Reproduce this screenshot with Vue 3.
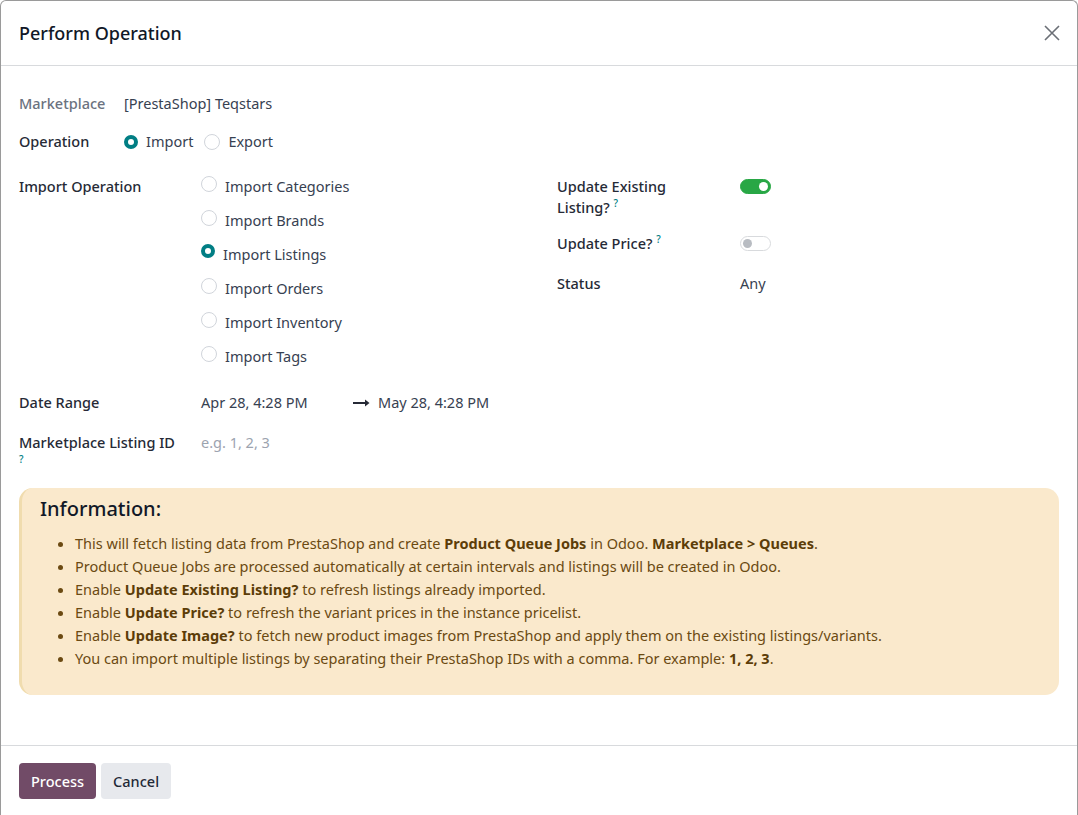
<script setup>
const ops = [
  { label: 'Import Categories', on: false },
  { label: 'Import Brands', on: false },
  { label: 'Import Listings', on: true },
  { label: 'Import Orders', on: false },
  { label: 'Import Inventory', on: false },
  { label: 'Import Tags', on: false },
]
</script>

<template>
  <div class="modal">
    <header class="head">
      <h4>Perform Operation</h4>
      <svg class="close" width="16" height="16" viewBox="0 0 16 16"><path d="M1 1L15 15M15 1L1 15" stroke="#6b6f76" stroke-width="1.6" fill="none"/></svg>
    </header>
    <main class="body">
      <div class="row first"><span class="lab muted">Marketplace</span><span>[PrestaShop] Teqstars</span></div>
      <div class="row second">
        <span class="lab">Operation</span>
        <span class="radio on"></span><span class="r1">Import</span>
        <span class="radio"></span><span>Export</span>
      </div>
      <div class="cols">
        <div class="left">
          <div class="lab2">Import Operation</div>
          <div class="list">
            <div v-for="o in ops" :key="o.label" class="opt"><span class="radio" :class="{ on: o.on }"></span>{{ o.label }}</div>
          </div>
        </div>
        <div class="right">
          <div class="rrow r-a"><div class="rl">Update Existing Listing? <sup>?</sup></div><span class="toggle on"><i></i></span></div>
          <div class="rrow r-b"><div class="rl">Update Price? <sup>?</sup></div><span class="toggle"><i></i></span></div>
          <div class="rrow r-c"><div class="rl">Status</div><span>Any</span></div>
        </div>
      </div>
      <div class="date">
        <div class="lab2">Date Range</div>
        <span class="d1">Apr 28, 4:28 PM</span>
        <svg class="arrow" width="17" height="10" viewBox="0 0 17 10"><path d="M0 5H14" stroke="#262a36" stroke-width="2"/><path d="M12 1.5L16.5 5L12 8.5Z" fill="#262a36"/></svg>
        <span>May 28, 4:28 PM</span>
      </div>
      <div class="mli">
        <div class="lab2">Marketplace Listing ID <sup>?</sup></div>
        <span class="ph">e.g. 1, 2, 3</span>
      </div>
      <section class="info">
        <h4>Information:</h4>
        <ul>
          <li>This will fetch listing data from PrestaShop and create <b>Product Queue Jobs</b> in Odoo. <b>Marketplace &gt; Queues</b>.</li>
          <li>Product Queue Jobs are processed automatically at certain intervals and listings will be created in Odoo.</li>
          <li>Enable <b>Update Existing Listing?</b> to refresh listings already imported.</li>
          <li>Enable <b>Update Price?</b> to refresh the variant prices in the instance pricelist.</li>
          <li>Enable <b>Update Image?</b> to fetch new product images from PrestaShop and apply them on the existing listings/variants.</li>
          <li>You can import multiple listings by separating their PrestaShop IDs with a comma. For example: <b>1, 2, 3</b>.</li>
        </ul>
      </section>
    </main>
    <footer class="foot">
      <button class="primary">Process</button>
      <button class="second-btn">Cancel</button>
    </footer>
  </div>
</template>

<style scoped>
.modal { width: 1078px; height: 815px; box-sizing: border-box; background: #fff; border: 1px solid #9a9a9a; border-bottom: 0; border-radius: 6px 6px 0 0; display: flex; flex-direction: column; font: 14.5px/21px "Noto Sans", sans-serif; color: #374151; overflow: hidden; }
.head { height: 64px; flex: none; display: flex; align-items: center; justify-content: space-between; padding: 0 17px 0 18px; border-bottom: 1px solid #d8dadd; box-sizing: content-box; }
.head h4 { margin: 0; font-size: 18px; font-weight: 500; color: #111827; }
.body { flex: 1; padding: 0 18px; }
.row { display: flex; align-items: center; }
.first { margin-top: 27px; }
.second { margin-top: 17px; }
.lab { width: 105px; font-weight: 500; color: #262a36; }
.muted { color: #6b7280; }
.r1 { margin-right: 11px; }
.radio { width: 14px; height: 14px; flex: none; border: 1px solid #d1d5db; border-radius: 50%; background: #fff; margin-right: 8px; box-sizing: content-box; display: inline-block; }
.radio.on { background: #fff; border: 4px solid #017e84; width: 6px; height: 6px; }
.cols { display: flex; margin-top: 24px; }
.left { width: 538px; display: flex; }
.lab2 { width: 182px; flex: none; font-weight: 500; color: #262a36; }
.opt { height: 34px; display: flex; align-items: flex-start; }
.right { flex: 1; }
.rrow { display: flex; }
.rl { width: 183px; flex: none; font-weight: 500; color: #262a36; padding-right: 60px; box-sizing: border-box; }
sup { color: #017e84; font-size: 10px; line-height: 0; font-weight: 500; }
.r-b { margin-top: 15px; }
.r-c { margin-top: 19px; }
.toggle { width: 31px; height: 15px; margin-top: 3px; border-radius: 8px; background: #fff; border: 1px solid #d8dadd; box-sizing: border-box; position: relative; display: block; }
.toggle i { position: absolute; left: 2px; top: 2px; width: 9px; height: 9px; border-radius: 50%; background: #b8bcc2; }
.toggle.on { background: #28a745; border-color: #28a745; }
.toggle.on i { left: 18px; background: #fff; }
.date { display: flex; align-items: center; margin-top: 12px; }
.d1 { width: 152px; }
.arrow { margin-right: 8px; }
.mli { display: flex; margin-top: 19px; }
.mli .lab2 { padding-right: 20px; box-sizing: border-box; }
.ph { color: #9ca3af; }
.info { margin-top: 14px; height: 207px; box-sizing: border-box; background: #fae9cc; border-left: 3px solid #f0dcae; border-radius: 14px; padding: 8px 18px; color: #6b4a12; }
.info h4 { margin: 0; font-size: 20px; line-height: 26px; font-weight: 500; color: #111827; }
.info ul { margin: 10px 0 0; padding-left: 35px; }
.info li { line-height: 23px; }
.info b { font-weight: 700; color: #5c3d08; }
.foot { height: 69px; flex: none; border-top: 1px solid #d8dadd; display: flex; align-items: center; gap: 5px; padding: 0 18px; }
button { height: 36px; border: 0; border-radius: 4px; font: 500 14.5px "Noto Sans", sans-serif; padding: 0 12px; }
.primary { background: #714b67; color: #fff; }
.second-btn { background: #e7e9ed; color: #1f2937; }
</style>
